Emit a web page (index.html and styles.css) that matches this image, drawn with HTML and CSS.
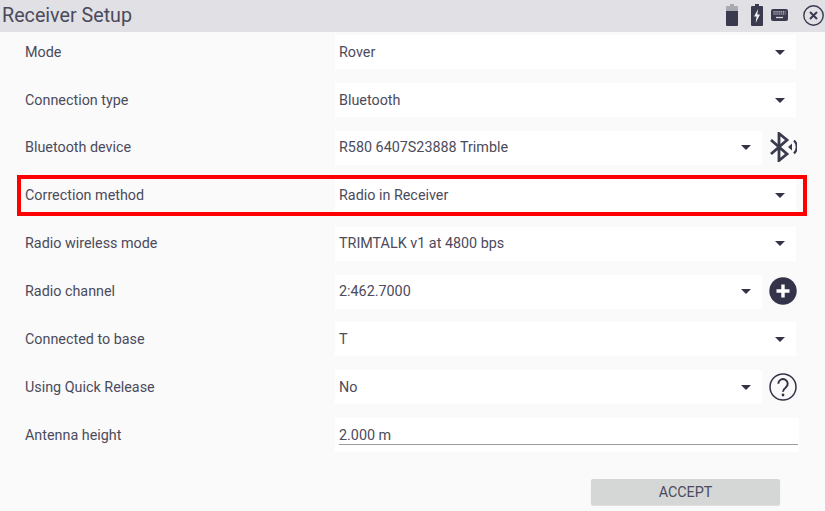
FILE: index.html
```html
<!DOCTYPE html>
<html lang="en">
<head>
<meta charset="utf-8">
<title>Receiver Setup</title>
<link rel="stylesheet" href="styles.css">
</head>
<body>
<header class="topbar">
  <h1 class="title">Receiver Setup</h1>
  <div class="status">
    <svg class="ico-batt" width="12" height="22" viewBox="0 0 12 22"><path fill="#a9a9b1" d="M4 0h4v2h3a1 1 0 0 1 1 1v5H0V3a1 1 0 0 1 1-1h3z"/><path fill="#3a3a4e" d="M0 7h12v14a1 1 0 0 1-1 1H1a1 1 0 0 1-1-1z"/></svg>
    <svg class="ico-charge" width="12" height="22" viewBox="0 0 12 22"><path fill="#3a3a4e" d="M4 0h4v2h3a1 1 0 0 1 1 1v18a1 1 0 0 1-1 1H1a1 1 0 0 1-1-1V3a1 1 0 0 1 1-1h3z"/><path fill="#f4f4f6" d="M7.200 5 3 12.600h2.600L4.600 19 9 10.600H6.300z"/></svg>
    <svg class="ico-keys" width="17" height="12" viewBox="0 0 17 12"><rect width="17" height="12" rx="2" fill="#3a3a4e"/><path stroke="#d8d8de" stroke-width="1.200" stroke-dasharray="1.200 .7" d="M2.500 2.800h12M2.500 5h12"/><path stroke="#d8d8de" stroke-width="1.300" d="M5 8.500h7"/></svg>
    <svg class="ico-close" width="21" height="21" viewBox="0 0 21 21"><circle cx="10.500" cy="10.500" r="9.700" fill="none" stroke="#3a3a4e" stroke-width="1.400"/><path d="m7 7 7 7M14 7l-7 7" stroke="#3a3a4e" stroke-width="2" fill="none"/></svg>
  </div>
</header>

<main class="form">
  <div class="row"><span class="label">Mode</span><div class="field"><span>Rover</span><i class="caret"></i></div></div>
  <div class="row"><span class="label">Connection type</span><div class="field"><span>Bluetooth</span><i class="caret"></i></div></div>
  <div class="row"><span class="label">Bluetooth device</span><div class="field field-short"><span>R580 6407S23888 Trimble</span><i class="caret"></i></div>
    <svg class="side" width="28" height="30" viewBox="0 0 28 30"><path d="M2 8l16 14-8 6.500V1.500L18 8 2 22" fill="none" stroke="#3a3a4e" stroke-width="2.800"/><path d="M23 11.500l-4 3.500 4 3.500z" fill="#3a3a4e"/><path d="M25 8.500a9 9 0 0 1 0 13" fill="none" stroke="#3a3a4e" stroke-width="2.200"/></svg></div>
  <div class="row"><span class="label">Correction method</span><div class="field"><span>Radio in Receiver</span><i class="caret"></i></div></div>
  <div class="row"><span class="label">Radio wireless mode</span><div class="field"><span>TRIMTALK v1 at 4800 bps</span><i class="caret"></i></div></div>
  <div class="row"><span class="label">Radio channel</span><div class="field field-short"><span>2:462.7000</span><i class="caret"></i></div>
    <svg class="side" width="28" height="28" viewBox="0 0 28 28"><circle cx="14" cy="14" r="13.700" fill="#33334a"/><path d="M14 7.500v13M7.500 14h13" stroke="#fff" stroke-width="3.400"/></svg></div>
  <div class="row"><span class="label">Connected to base</span><div class="field"><span>T</span><i class="caret"></i></div></div>
  <div class="row"><span class="label">Using Quick Release</span><div class="field field-short"><span>No</span><i class="caret"></i></div>
    <svg class="side" width="28" height="28" viewBox="0 0 28 28"><circle cx="14" cy="14" r="13" fill="none" stroke="#33334a" stroke-width="1.500"/><path d="M9.300 10.800a4.700 4.700 0 1 1 7.300 3.900c-1.700 1.200-2.600 2-2.600 4" fill="none" stroke="#33334a" stroke-width="2"/><circle cx="14" cy="22" r="1.400" fill="#33334a"/></svg></div>
  <div class="row"><span class="label">Antenna height</span><div class="field field-input"><span>2.000 m</span></div></div>
  <div class="actions"><button class="accept" type="button">ACCEPT</button></div>
</main>

<div class="highlight"></div>
</body>
</html>
```

FILE: styles.css
```css
* { box-sizing: border-box; }
html, body { margin: 0; height: 100%; }
body {
  width: 825px;
  height: 511px;
  overflow: hidden;
  position: relative;
  background: #fafafa;
  color: #4b4b5c;
  font-family: Roboto, "Liberation Sans", sans-serif;
  font-size: 14.35px;
}
.topbar {
  height: 32px;
  background: #e1e0e5;
  display: flex;
  align-items: center;
  justify-content: space-between;
  padding: 0 1px 0 2px;
}
.title { margin: 0; font-size: 19.7px; font-weight: 400; line-height: 32px; }
.status { display: flex; align-items: center; padding-bottom: 2px; }
.ico-batt { margin-right: 13px; }
.ico-charge { margin-right: 8px; }
.ico-keys { margin-right: 15px; }
.form { margin-top: -3.8px; padding-left: 25px; }
.row { display: flex; align-items: center; height: 47.88px; }
.label { width: 310px; flex: none; }
.field {
  width: 461px;
  height: 34px;
  background: #fff;
  display: flex;
  align-items: center;
  justify-content: space-between;
  padding: 0 11px 0 4px;
}
.field-short { width: 427px; }
.field-input {
  position: relative;
  width: 464px;
}
.field-input::after {
  content: "";
  position: absolute;
  left: 4px;
  right: 1px;
  top: 26px;
  height: 1px;
  background: #9c9ca0;
}
.caret {
  width: 0;
  height: 0;
  border-left: 5.5px solid transparent;
  border-right: 5.5px solid transparent;
  border-top: 5.5px solid #33334a;
}
.side { margin: 0 0 1px 7px; flex: none; }
.actions { display: flex; justify-content: flex-end; padding: 20px 45px 0 0; }
.accept {
  width: 189px;
  height: 26px;
  border: 0;
  border-radius: 2px;
  background: #d5d6d6;
  color: #4b4b5c;
  font: 400 14.35px Roboto, "Liberation Sans", sans-serif;
  box-shadow: 0 1px 1px rgba(0, 0, 0, .12);
}
.highlight {
  position: absolute;
  left: 17px;
  top: 175px;
  width: 790px;
  height: 41px;
  border: 4px solid #ff0000;
  pointer-events: none;
}
```
